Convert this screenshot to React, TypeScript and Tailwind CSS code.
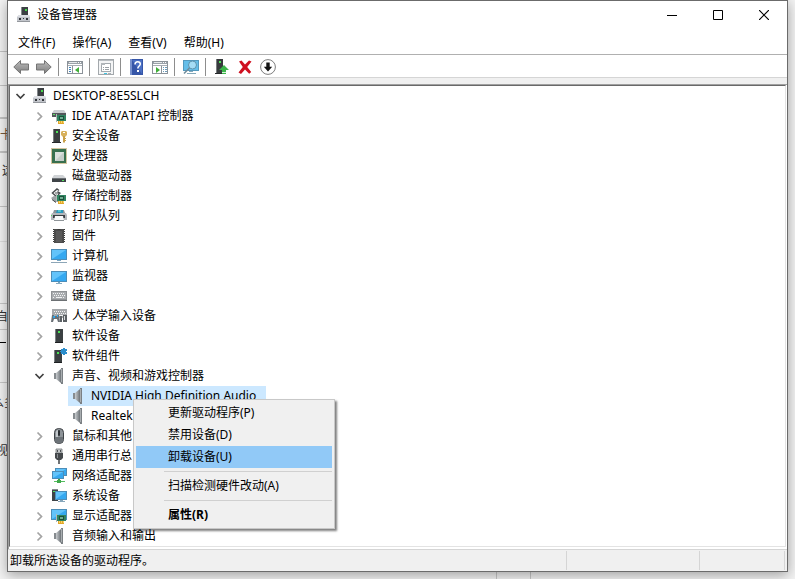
import type { ReactNode } from "react";
import clsx from "clsx";

function Svg({ children }: { children: ReactNode }) {
  return (
    <svg width="16" height="16" viewBox="0 0 16 16" className="shrink-0" aria-hidden="true">
      {children}
    </svg>
  );
}

function ComputerRootIcon() {
  return (
    <Svg>
      <rect x="5" y="0" width="7" height="9" fill="#3c4043" />
      <rect x="5" y="0" width="1" height="9" fill="#85898c" />
      <rect x="9" y="2" width="2" height="2" fill="#45d84a" />
      <path d="M3 8h10l1 2v5H1v-5z" fill="#c2c5cb" />
      <path d="M3 8h10l1 2H1z" fill="#dcdee3" />
      <path d="M1 14h13v1H1z" fill="#94989d" />
      <path d="M3 11h2v2H3zM7 11h1v1H7zM10 11h2v2h-2z" fill="#33363a" />
    </Svg>
  );
}

function Card() {
  return (
    <>
      <path d="M6 7h9v6H6z" fill="#2f8560" />
      <path d="M5 6h1v8H5z" fill="#b3b9b9" />
      <path d="M8 8h5v4H8z" fill="#1c4f3b" />
      <path d="M9 9h3v2H9z" fill="#6fae90" />
      <path d="M7 13h6v3H7z" fill="#e2a62a" />
      <path d="M8 13h1v2H8zM10 13h1v2h-1zM12 13h1v2h-1z" fill="#f6d466" />
    </>
  );
}

function IdeIcon() {
  return (
    <Svg>
      <path d="M3 2h10l2 3H1z" fill="#c9cccf" />
      <path d="M1 5h14v4H1z" fill="#54585b" />
      <path d="M2 6h2v1H2z" fill="#5be063" />
      <Card />
    </Svg>
  );
}

function SecurityIcon() {
  return (
    <Svg>
      <path d="M2 1h7v13H2z" fill="#3b3e40" />
      <path d="M2 1h1v13H2z" fill="#777b7d" />
      <path d="M1 14h9v1H1z" fill="#25282a" />
      <path d="M5 3h2v2H5z" fill="#4de257" />
      <path d="M10 4l1-1h4l1 1v3l-2 2h-2l-2-2z" fill="#d8b15c" />
      <path d="M12 8h2v6l-1 1-1-1z" fill="#c9a047" />
      <path d="M14 10h1v1h-1zM14 12h1v1h-1z" fill="#c9a047" />
      <path d="M12 4h2v1h-2z" fill="#fff" />
    </Svg>
  );
}

function CpuIcon() {
  return (
    <Svg>
      <rect x="0.5" y="0.5" width="15" height="15" fill="none" stroke="#a48b3e" strokeDasharray="1 1" />
      <rect x="1" y="1" width="14" height="14" fill="#38704f" />
      <rect x="4" y="4" width="9" height="9" fill="#dbe0dd" />
      <path d="M4 13l9-9v9z" fill="#c6cdc9" />
    </Svg>
  );
}

function DiskIcon() {
  return (
    <Svg>
      <path d="M3 7h9l3 3H1z" fill="#d0d3d6" />
      <path d="M1 10h14v4H1z" fill="#3f4447" />
      <path d="M1 10h14v1H1z" fill="#6d7276" />
      <path d="M11 12h2v1h-2z" fill="#55e05d" />
    </Svg>
  );
}

function StorageIcon() {
  return (
    <Svg>
      <path d="M8 2.500L6 1 1.500 5 6 9" fill="none" stroke="#4b4e51" strokeWidth="1.5" />
      <path d="M4 5h5M6.500 3.500L9 5 7 7" fill="none" stroke="#4b4e51" strokeWidth="1.2" />
      <path d="M0 10l4 4h3V9L3 8z" fill="#9da1a4" />
      <path d="M1 11.500l4 3" stroke="#44484a" />
      <Card />
    </Svg>
  );
}

function PrinterIcon() {
  return (
    <Svg>
      <path d="M3 2h10l1 3H2z" fill="#8c9499" />
      <path d="M6 2h6v3H5z" fill="#2998bd" />
      <path d="M7 2h3v2H7z" fill="#54c6cf" />
      <path d="M1 5h14l1 2v5H0V7z" fill="#b4b8bc" />
      <path d="M2 7h12v3H2z" fill="#3b3f43" />
      <path d="M4 8h8l1 5H3z" fill="#f8f9fa" />
      <path d="M3 12.500h10" stroke="#8e9498" />
      <path d="M0 7h1v1H0z" fill="#51d35c" />
    </Svg>
  );
}

function FirmwareIcon() {
  return (
    <Svg>
      <path
        d="M2 1.500h12M2 3.500h12M2 5.500h12M2 7.500h12M2 9.500h12M2 11.500h12M2 13.500h12"
        stroke="#3a3a3a"
      />
      <path d="M3 1h3l1 1h2l1-1h3v14H3z" fill="#4c4c4c" />
      <path d="M5 3h6v11H5z" fill="#5a5a5a" />
    </Svg>
  );
}

function Screen({ x, y, w, h }: { x: number; y: number; w: number; h: number }) {
  return (
    <>
      <rect x={x} y={y} width={w} height={h} fill="#4c8db8" />
      <rect x={x + 1} y={y + 1} width={w - 2} height={h - 2} fill="#35a8f0" />
      <path d={`M${x + 1} ${y + h - 1}V${y + 1}h${w - 2}z`} fill="#62c3fa" />
    </>
  );
}

function PcIcon() {
  return (
    <Svg>
      <Screen x={0} y={1} w={16} h={11} />
      <path d="M6 12h4v1H6z" fill="#78a7c4" />
      <path d="M0 14h16v1H0z" fill="#8da6b7" />
    </Svg>
  );
}

function MonitorIcon() {
  return (
    <Svg>
      <Screen x={0} y={3} w={16} h={11} />
      <path d="M7 14h2v1H7z" fill="#78a7c4" />
      <path d="M5 15h6v1H5z" fill="#87a9be" />
    </Svg>
  );
}

function Keys() {
  return (
    <>
      <path d="M2 5.500h12M3 7.500h11M2 9.500h2M12 9.500h2" stroke="#f2f3f4" strokeDasharray="1 1" />
      <path d="M5 9h6v1H5z" fill="#f2f3f4" />
    </>
  );
}

function KeyboardIcon() {
  return (
    <Svg>
      <path d="M0 3h16v10H0z" fill="#8f9295" />
      <path d="M1 4h14v7H1z" fill="#a9acaf" />
      <Keys />
      <path d="M0 12h16v1H0z" fill="#6c7073" />
    </Svg>
  );
}

function HidIcon() {
  return (
    <Svg>
      <path d="M1 1h15v9H1z" fill="#a5a8ab" />
      <g transform="translate(1 -2)">
        <Keys />
      </g>
      <path d="M1 7h2l1 1h2l1-1h1l1 7H7l-1-3H3l-1 3H0z" fill="#697076" />
      <path d="M2 8h2v2H2zM6 7h1v2H6z" fill="#2aa5ea" />
      <path d="M9 8h2v6H9zM12 7h4v7h-4z" fill="#5b6064" />
      <path d="M13 8h1v4h-1z" fill="#d7dadd" />
    </Svg>
  );
}

function SoftwareDeviceIcon() {
  return (
    <Svg>
      <path d="M4 1h8v14H4z" fill="#3b4042" />
      <path d="M4 1h1v13H4z" fill="#7b8082" />
      <path d="M4 14h8v1H4z" fill="#1d2022" />
      <path d="M7 3h2v2H7z" fill="#4ae354" />
    </Svg>
  );
}

function SoftwareComponentIcon() {
  return (
    <Svg>
      <path d="M3 2h8v12H3z" fill="#3b4042" />
      <path d="M3 2h1v12H3z" fill="#7b8082" />
      <path d="M3 14h8v1H3z" fill="#1d2022" />
      <path d="M6 4h2v2H6z" fill="#4ae354" />
      <path d="M10 1h2V0h2v1h2v2h-1v1h1v2h-2v1h-2V6h-2V4H9V3h1z" fill="#2b8dcb" />
    </Svg>
  );
}

function SpeakerIcon() {
  return (
    <Svg>
      <defs>
        <linearGradient id="cone" x1="0" x2="1">
          <stop offset="0" stopColor="#c9cccf" />
          <stop offset="0.5" stopColor="#9ba0a4" />
          <stop offset="1" stopColor="#6d7276" />
        </linearGradient>
      </defs>
      <path d="M3 5h2v6H3z" fill="#868b8f" />
      <path d="M5 5l5-4v14l-5-4z" fill="url(#cone)" />
      <path d="M10 0h2v16h-2z" fill="#7b8084" />
      <path d="M10 1h1v13h-1z" fill="#a9aeb1" />
    </Svg>
  );
}

function MouseIcon() {
  return (
    <Svg>
      <rect x="3.5" y="0.5" width="9" height="15" rx="4" fill="#8d9398" stroke="#3f4347" />
      <path d="M5 4c0-1 1-2 2-2v9H5z" fill="#c3c8cc" />
      <path d="M4 9h8v3c0 2-1 3-4 3s-4-1-4-3z" fill="#6c7277" />
      <rect x="7" y="2" width="2" height="6" rx="1" fill="#2b2f33" />
    </Svg>
  );
}

function UsbIcon() {
  return (
    <Svg>
      <path d="M5 1h6v4H5z" fill="#c5c8ca" stroke="#75797b" strokeWidth="0.8" />
      <path d="M6 2h1v2H6zM9 2h1v2H9z" fill="#4c5053" />
      <path d="M4 5h8v5l-2 2H6l-2-2z" fill="#45494c" />
      <path d="M6 6h1v4H6z" fill="#8a8e91" />
      <path d="M7 12h2v4H7z" fill="#6e7275" />
    </Svg>
  );
}

function NetworkIcon() {
  return (
    <Svg>
      <Screen x={4} y={0} w={12} h={8} />
      <Screen x={1} y={3} w={12} h={8} />
      <path d="M7 11h2v2H7z" fill="#3d9c49" />
      <path d="M3 13h11v1H3z" fill="#55bd5f" />
      <path d="M6 12h4v3H6z" fill="#3fa94b" />
    </Svg>
  );
}

function SystemIcon() {
  return (
    <Svg>
      <path d="M1 1h6v12H1z" fill="#3d4347" />
      <path d="M1 1h6v1H1z" fill="#868c90" />
      <path d="M2 3h2v1H2z" fill="#50dc58" />
      <Screen x={4} y={3} w={12} h={9} />
      <path d="M9 12h3v1H9zM7 13h7v1H7z" fill="#86a6bb" />
    </Svg>
  );
}

function DisplayAdapterIcon() {
  return (
    <Svg>
      <Screen x={0} y={1} w={16} h={11} />
      <Card />
    </Svg>
  );
}

function Arrow({ flip }: { flip?: boolean }) {
  return (
    <Svg>
      <defs>
        <linearGradient id={flip ? "arrow-r" : "arrow-l"} x1="0" x2="0" y1="0" y2="1">
          <stop offset="0" stopColor="#bdbdbd" />
          <stop offset="1" stopColor="#7e7e7e" />
        </linearGradient>
      </defs>
      <path
        d="M.8 8L7.500 1.500V5H15.500v6h-8v3.500z"
        transform={flip ? "matrix(-1 0 0 1 16 0)" : undefined}
        fill={flip ? "url(#arrow-r)" : "url(#arrow-l)"}
        stroke="#747474"
      />
    </Svg>
  );
}

function PaneFrame() {
  return (
    <>
      <rect x="0.500" y="2.500" width="15" height="12" fill="#fff" stroke="#8b9299" />
      <path d="M1 3h14v2H1z" fill="#9ba2a9" />
      <path d="M2 3.500h8" stroke="#e5e8ea" />
      <path d="M11 3.500h4" stroke="#fff" strokeDasharray="1 1" />
      <path d="M1 6.500h14" stroke="#a7adb3" />
    </>
  );
}

function TreePaneIcon() {
  return (
    <Svg>
      <PaneFrame />
      <path d="M5.500 7v8" stroke="#8b9299" />
      <path d="M2 8.500h3M2 10.500h3M2 12.500h3" stroke="#3e83bd" strokeDasharray="2 1" />
      <path d="M12 8v6l-4-3z" fill="#3fae37" />
    </Svg>
  );
}

function ActionPaneIcon() {
  return (
    <Svg>
      <PaneFrame />
      <path d="M9.500 7v8" stroke="#8b9299" />
      <path d="M11 8.500h4M11 10.500h4M11 12.500h4" stroke="#6b9ab9" strokeDasharray="1 1 2" />
      <path d="M4 8v6l4-3z" fill="#3fae37" />
    </Svg>
  );
}

function PropertiesIcon() {
  return (
    <Svg>
      <rect x="0.500" y="0.500" width="15" height="15" fill="#f4f5f6" stroke="#a3a8ac" />
      <path d="M1 1.500h14" stroke="#b9bec2" />
      <rect x="3.500" y="4.500" width="9" height="8" fill="#fff" stroke="#a3a9ae" />
      <path d="M3 4h4v2H3z" fill="#b1b6ba" />
      <path d="M5 8.500h1M7 8.500h4M5 10.500h1M7 10.500h4" stroke="#9aa0a5" />
      <path d="M6 14h3v1H6z" fill="#3cc2df" />
      <path d="M10 14h3v1h-3z" fill="#aab0b5" />
    </Svg>
  );
}

function HelpIcon() {
  return (
    <Svg>
      <rect x="1" y="0" width="13" height="16" fill="#3656a8" />
      <rect x="1" y="0" width="2" height="16" fill="#7891cd" />
      <path d="M3 1h10v14z" fill="#4b70c4" />
      <path
        d="M6 5.500C6 3.500 7.200 2.700 8.700 2.700S11.300 3.500 11.300 5c0 2-2.500 2-2.500 4.500"
        fill="none"
        stroke="#fff"
        strokeWidth="1.500"
      />
      <path d="M8 11h2v2H8z" fill="#fff" />
    </Svg>
  );
}

function ScanIcon() {
  return (
    <Svg>
      <rect x="0" y="1" width="16" height="11" fill="#5499be" />
      <rect x="1" y="2" width="14" height="9" fill="#65bee9" />
      <path d="M6 12h4v1H6zM4 14h9v1H4z" fill="#83a8ba" />
      <circle cx="9.500" cy="6" r="4" fill="#a5dcf5" stroke="#5c92ad" />
      <path d="M6.500 9L1 14.500" stroke="#6f8c9b" strokeWidth="1.600" />
    </Svg>
  );
}

function UpdateDriverIcon() {
  return (
    <Svg>
      <path d="M2 0h7v14H2z" fill="#373b3d" />
      <path d="M2 0h1v14H2z" fill="#7a7e80" />
      <path d="M1 14h9v1H1z" fill="#25282a" />
      <path d="M5 2h2v2H5z" fill="#4ee157" />
      <path d="M10 6l5 5h-3v1H8v-1H5z" fill="#3bb54a" />
      <path d="M8 12h4v3H8z" fill="#3bb54a" />
      <path d="M8 13h4v1H8z" fill="#d7efd8" />
    </Svg>
  );
}

function RemoveIcon() {
  return (
    <Svg>
      <path
        d="M2 2.500L4.500 1.500 8 5.500l4-4 2.500 1L10.200 8l4 5-2 1.800L8 10.500 4 15l-2.500-1.500L5.800 8z"
        fill="#cf1020"
      />
    </Svg>
  );
}

function DownCircleIcon() {
  return (
    <Svg>
      <circle cx="8" cy="8" r="7.400" fill="#fff" stroke="#7d7d7d" />
      <path d="M6.300 3.500h3.400v4.300h2.500L8 12.500 3.800 7.800h2.500z" fill="#111" />
    </Svg>
  );
}

function Chevron({ open }: { open?: boolean }) {
  return (
    <svg width="11" height="11" viewBox="0 0 11 11" fill="none" strokeWidth="1.700" aria-hidden="true">
      {open ? (
        <path d="M1.500 3l4 4 4-4" stroke="#404040" />
      ) : (
        <path d="M3.500 1.500l4 4-4 4" stroke="#a3a3a3" />
      )}
    </svg>
  );
}

type Device = { name: string; icon: () => ReactNode; children?: string[] };

const devices: Device[] = [
  { name: "IDE ATA/ATAPI 控制器", icon: IdeIcon },
  { name: "安全设备", icon: SecurityIcon },
  { name: "处理器", icon: CpuIcon },
  { name: "磁盘驱动器", icon: DiskIcon },
  { name: "存储控制器", icon: StorageIcon },
  { name: "打印队列", icon: PrinterIcon },
  { name: "固件", icon: FirmwareIcon },
  { name: "计算机", icon: PcIcon },
  { name: "监视器", icon: MonitorIcon },
  { name: "键盘", icon: KeyboardIcon },
  { name: "人体学输入设备", icon: HidIcon },
  { name: "软件设备", icon: SoftwareDeviceIcon },
  { name: "软件组件", icon: SoftwareComponentIcon },
  {
    name: "声音、视频和游戏控制器",
    icon: SpeakerIcon,
    children: ["NVIDIA High Definition Audio", "Realtek"],
  },
  { name: "鼠标和其他", icon: MouseIcon },
  { name: "通用串行总", icon: UsbIcon },
  { name: "网络适配器", icon: NetworkIcon },
  { name: "系统设备", icon: SystemIcon },
  { name: "显示适配器", icon: DisplayAdapterIcon },
  { name: "音频输入和输出", icon: SpeakerIcon },
];

const tools: { label: string; icon: ReactNode }[][] = [
  [
    { label: "后退", icon: <Arrow /> },
    { label: "前进", icon: <Arrow flip /> },
  ],
  [{ label: "显示/隐藏控制台树", icon: <TreePaneIcon /> }],
  [{ label: "属性", icon: <PropertiesIcon /> }],
  [
    { label: "帮助", icon: <HelpIcon /> },
    { label: "显示/隐藏操作窗格", icon: <ActionPaneIcon /> },
  ],
  [{ label: "扫描检测硬件改动", icon: <ScanIcon /> }],
  [
    { label: "更新驱动程序", icon: <UpdateDriverIcon /> },
    { label: "卸载设备", icon: <RemoveIcon /> },
    { label: "禁用设备", icon: <DownCircleIcon /> },
  ],
];

function TitleBar() {
  return (
    <header className="flex h-[30px] items-center bg-white pb-0.5 pl-2">
      <ComputerRootIcon />
      <h1 className="ml-[5px] flex-1">设备管理器</h1>
      <button aria-label="最小化" className="flex h-full w-[46px] items-center justify-center">
        <svg width="10" height="10" stroke="#000">
          <path d="M0 5.500h10" />
        </svg>
      </button>
      <button aria-label="最大化" className="flex h-full w-[46px] items-center justify-center">
        <svg width="10" height="10" stroke="#000" fill="none">
          <path d="M.5.500h9v9h-9z" />
        </svg>
      </button>
      <button aria-label="关闭" className="flex h-full w-[46px] items-center justify-center">
        <svg width="10" height="10" stroke="#000" strokeWidth="1.200">
          <path d="M0 0l10 10M10 0L0 10" />
        </svg>
      </button>
    </header>
  );
}

function MenuBar() {
  return (
    <nav className="flex h-6 items-center gap-px border-b border-[#b0b0b0] bg-white pl-0.5">
      {["文件(F)", "操作(A)", "查看(V)", "帮助(H)"].map((item) => (
        <button key={item} className="px-2">
          {item}
        </button>
      ))}
    </nav>
  );
}

function Toolbar() {
  return (
    <div
      role="toolbar"
      className="flex h-[23px] items-center border-b border-[#d5d5d5] bg-white pt-0.5 pl-0.5"
    >
      {tools.map((group, i) => (
        <div key={i} className="flex items-center">
          {i > 0 && <span className="mr-[5px] ml-0.5 h-[18px] w-px bg-[#8d8d8d]" />}
          {group.map((tool) => (
            <button key={tool.label} aria-label={tool.label} className="w-[23px] pl-[3px]">
              {tool.icon}
            </button>
          ))}
        </div>
      ))}
    </div>
  );
}

function MenuItem({ children, active, bold }: { children: string; active?: boolean; bold?: boolean }) {
  return (
    <button
      role="menuitem"
      className={clsx(
        "flex h-[22px] items-center pl-8 text-left",
        active && "bg-[#91c9f7]",
        bold && "font-bold",
      )}
    >
      {children}
    </button>
  );
}

function Separator() {
  return <div role="separator" className="my-[3px] ml-7 h-px bg-[#d0d0d0]" />;
}

function ContextMenu() {
  return (
    <div
      role="menu"
      className="absolute top-[13px] left-[65px] z-10 flex w-[202px] flex-col border border-[#c8c8c8] bg-[#f0f0f0] p-0.5 shadow-[2px_2px_2px_rgba(0,0,0,0.5)]"
    >
      <MenuItem>更新驱动程序(P)</MenuItem>
      <MenuItem>禁用设备(D)</MenuItem>
      <MenuItem active>卸载设备(U)</MenuItem>
      <Separator />
      <MenuItem>扫描检测硬件改动(A)</MenuItem>
      <Separator />
      <MenuItem bold>属性(R)</MenuItem>
    </div>
  );
}

function DeviceTree() {
  return (
    <ul role="tree" className="flex-1 whitespace-nowrap">
      <li role="treeitem" aria-expanded="true">
        <div className="flex h-5 items-center pl-[5px]">
          <button aria-label="折叠" className="mr-[6px]">
            <Chevron open />
          </button>
          <ComputerRootIcon />
          <span className="ml-[5px]">DESKTOP-8E5SLCH</span>
        </div>
        <ul role="group">
          {devices.map(({ name, icon: Icon, children }) => (
            <li key={name} role="treeitem" aria-expanded={!!children}>
              <div className="flex h-5 items-center pl-6">
                <button aria-label={children ? "折叠" : "展开"} className="mr-[6px]">
                  <Chevron open={!!children} />
                </button>
                <Icon />
                <span className="ml-[5px]">{name}</span>
              </div>
              {children && (
                <ul role="group" className="pl-[58px]">
                  {children.map((child, i) => (
                    <li key={child} role="treeitem" aria-selected={i === 0} className="relative flex">
                      <div
                        className={clsx(
                          "flex h-5 items-center pr-2.5 pl-0.5",
                          i === 0 && "bg-[#cce8ff]",
                        )}
                      >
                        <SpeakerIcon />
                        <span className="ml-[5px]">{child}</span>
                      </div>
                      {i === 0 && <ContextMenu />}
                    </li>
                  ))}
                </ul>
              )}
            </li>
          ))}
        </ul>
      </li>
    </ul>
  );
}

function StatusBar() {
  return (
    <footer className="flex h-[22px] items-stretch border-t border-[#d5d5d5] bg-[#f0f0f0] py-px pr-0.5">
      <p className="flex flex-1 items-center border-r border-[#d5d5d5] pl-0.5">卸载所选设备的驱动程序。</p>
      <div className="w-[133px] border-r border-[#d5d5d5]" />
      <div className="w-[85px] border-r border-[#d5d5d5]" />
    </footer>
  );
}

// The page that shows past the edges of the window
function Backdrop() {
  return (
    <div
      className="absolute inset-0 flex flex-col overflow-hidden bg-[#f3f3f3] text-[#333]"
      aria-hidden="true"
    >
      <div className="flex w-4 flex-col">
        <div className="h-[52px] border-b border-[#c4c4c4]" />
        <div className="h-[34px] border-b border-[#c4c4c4]" />
        <div className="h-[33px] border-b-2 border-[#c4c4c4]" />
        <div className="flex h-[34px] items-center border-b-2 border-[#c4c4c4] text-[#76583b]">卡</div>
        <div className="h-[54px] border-b border-[#c4c4c4] pt-2.5 pl-0.5">这</div>
        <div className="h-[35px] border-b border-[#dedede]" />
        <div className="h-[62px] border-b border-[#c8c8c8]" />
        <div className="flex h-[26px] items-center border-b border-[#c8c8c8]">
          <span className="-ml-1">自</span>
        </div>
        <div className="h-[13px] w-1.5 border-b border-black" />
        <div className="h-10 border-b border-[#c8c8c8]" />
        <div className="h-11 pt-3 whitespace-nowrap">
          <span className="-ml-2">么多</span>
        </div>
        <div className="pt-4">
          <span className="-ml-1">视</span>
        </div>
      </div>
      <div className="flex flex-1 pl-[496px]">
        <div className="w-[35px] border-x border-[#c8c8c8]" />
      </div>
    </div>
  );
}

export default function App() {
  return (
    <div
      lang="zh-CN"
      className="relative min-h-screen overflow-hidden font-['Noto_Sans','Noto_Sans_CJK_SC',sans-serif] text-[12px] leading-4 text-black [font-kerning:none]"
    >
      <Backdrop />
      <main className="relative mx-[7px] mb-[7px] flex flex-col border border-[#6b6b6b] bg-white shadow-[0_3px_12px_rgba(0,0,0,0.35)]">
        <TitleBar />
        <MenuBar />
        <Toolbar />
        <div className="h-[6px] bg-[#f0f0f0]" />
        <div className="flex border-t border-l border-[#a0a0a0] pr-px pb-0.5">
          <div className="flex flex-1 border border-t-[#696969] border-r-[#e3e3e3] border-b-[#e3e3e3] border-l-[#696969]">
            <DeviceTree />
          </div>
        </div>
        <StatusBar />
      </main>
    </div>
  );
}
